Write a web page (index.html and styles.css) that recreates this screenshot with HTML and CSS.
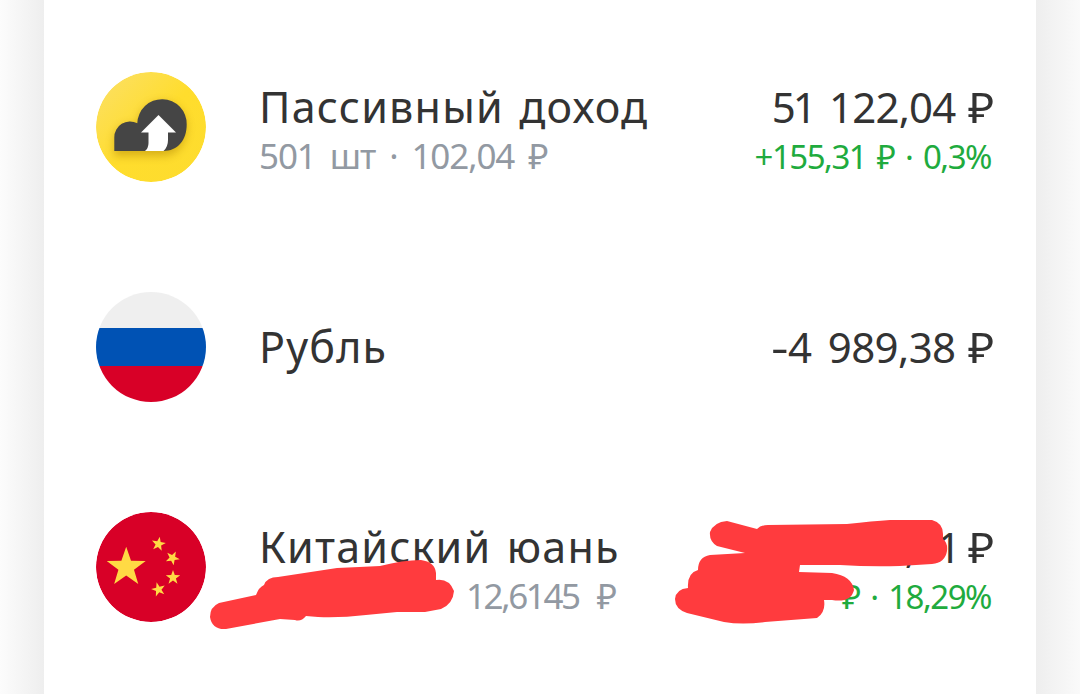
FILE: index.html
```html
<!DOCTYPE html>
<html lang="ru">
<head>
    <meta charset="UTF-8">
    <meta name="viewport" content="width=device-width, initial-scale=1.0">
    <title>Портфель</title>
    <link rel="stylesheet" href="styles.css">
</head>
<body>
    <main class="portfolio">
        <div class="asset">
            <svg class="icon" viewBox="0 0 110 110">
                <defs>
                    <linearGradient id="gold" x1="0" y1="0" x2="1" y2="1">
                        <stop offset="0" stop-color="#fbe06a"/>
                        <stop offset="0.5" stop-color="#ffdd2d"/>
                        <stop offset="1" stop-color="#fddc2e"/>
                    </linearGradient>
                    <filter id="soft" x="-30%" y="-30%" width="160%" height="170%">
                        <feGaussianBlur stdDeviation="4"/>
                    </filter>
                </defs>
                <circle cx="55" cy="55" r="55" fill="url(#gold)"/>
                <path d="M18.300 84V68A15.700 15.700 0 0 1 41.300 54A24.700 24.700 0 0 1 90.700 55C90.700 70 82 84 67 84Z" fill="#a87c00" opacity="0.45" filter="url(#soft)"/>
                <path d="M18.300 79V65.500A15.700 15.700 0 0 1 41.300 51.300A24.700 24.700 0 0 1 90.700 52.500C90.700 68 82 79 67 79Z" fill="#454545"/>
                <path d="M62.500 43L80 60.500H72V68Q72 75 67.500 79H49Q52.500 76 52.500 71V60.500H45Z" fill="#fff"/>
            </svg>
            <div class="info">
                <div class="name">Пассивный доход</div>
                <div class="details">501 шт · 102,04 ₽</div>
            </div>
            <div class="value">
                <div class="amount"><span class="tight">51</span> 122,04<span class="currency">₽</span></div>
                <div class="profit">+155,31 ₽ · 0,3%</div>
            </div>
        </div>

        <div class="asset">
            <div class="icon flag-ru"></div>
            <div class="info single">
                <div class="name">Рубль</div>
            </div>
            <div class="value single">
                <div class="amount debt"><span class="minus">-</span>4 989,38<span class="currency">₽</span></div>
            </div>
        </div>

        <div class="asset">
            <svg class="icon" viewBox="0 0 110 110">
                <defs>
                    <path id="star" d="M0 -10L2.350 -3.240L9.510 -3.090L3.800 1.240L5.880 8.090L0 4L-5.880 8.090L-3.800 1.240L-9.510 -3.090L-2.350 -3.240Z"/>
                </defs>
                <circle cx="55" cy="55" r="55" fill="#d80027"/>
                <g fill="#ffda44">
                    <use href="#star" transform="translate(30.200 55.300) scale(2.050)"/>
                    <use href="#star" transform="translate(62.500 32) rotate(10) scale(0.740)"/>
                    <use href="#star" transform="translate(76.500 46) rotate(27) scale(0.740)"/>
                    <use href="#star" transform="translate(77 65.500) scale(0.760)"/>
                    <use href="#star" transform="translate(62.500 77.500) rotate(-15) scale(0.740)"/>
                </g>
            </svg>
            <div class="info">
                <div class="name">Китайский юань</div>
                <div class="details"><span class="covered">0 000 ¥ ·</span><span class="rate">12,6145</span> ₽</div>
            </div>
            <div class="value">
                <div class="amount yuan">00 000,01<span class="currency">₽</span></div>
                <div class="profit"><span class="covered-profit">+0 000</span>₽ · 18,29%</div>
            </div>
            <!-- marker strokes over private sums -->
            <svg class="marker" viewBox="200 510 770 130">
                <path d="M219 603L256 595Q259 587 264 585Q267 577 278 577L337 568Q360 567 380 566Q403 560 421 560Q435 562 436 573L436 580Q449 578 454 591Q453 604 441 609L425 612H397L366 615Q340 618 318 617L306 616Q301 622 295 620L280 619L226 629Q212 630 210 617Q210 607 219 603Z"/>
                <path d="M727 521L757 529Q761 525 768 525L847 524Q873 521 890 520L932 520Q943 523 943 534V539Q948 543 947 551Q945 563 932 564L900 566Q870 567 840 565L800 565L799 572L832 573Q852 576 854 590Q851 603 832 600L824 600Q826 612 817 618L765 622Q742 625 724 622L687 613Q675 609 675 599Q676 589 688 588Q687 573 698 570Q698 557 710 555L745 553L717 546Q709 541 710 532Q714 522 727 521Z"/>
            </svg>
        </div>
    </main>
</body>
</html>
```

FILE: styles.css
```css
body {
    margin: 0;
    height: 694px;
    overflow: hidden;
    background: linear-gradient(to right, #fcfcfc 0, #eeeeee 44px, #eeeeee 1036px, #fafafa 1080px);
    font-family: "Noto Sans", sans-serif;
}

.portfolio {
    box-sizing: border-box;
    width: 992px;
    height: 694px;
    margin: 0 auto;
    padding: 17.4px 43px 0 52px;
    background-color: #fff;
}

.asset {
    position: relative;
    display: flex;
    align-items: center;
    height: 220px;
}

.icon {
    flex: none;
    width: 110px;
    height: 110px;
    border-radius: 50%;
}

.flag-ru {
    background: linear-gradient(to bottom, #efefef 0 36px, #0052b4 36px 74px, #d80027 74px);
}

.info {
    flex: 1;
    margin-left: 53px;
    padding-top: 6px;
    white-space: nowrap;
}

.value {
    padding-top: 8px;
    text-align: right;
    white-space: nowrap;
}

.single {
    padding-top: 0;
}

.name,
.amount {
    color: #333;
    font-size: 42px;
    line-height: 50px;
}

.name {
    font-size: 43px;
    font-weight: 430;
    letter-spacing: 1.2px;
    word-spacing: 3px;
}

.amount {
    letter-spacing: -0.8px;
}

.amount .tight {
    letter-spacing: -3px;
    margin-right: 5px;
}

.debt {
    letter-spacing: -0.6px;
    word-spacing: 6px;
}

.minus {
    display: inline-block;
    margin-right: 2px;
    transform: scaleX(1.3);
}

.yuan {
    letter-spacing: -1.5px;
}

.details {
    color: #9299a2;
    font-size: 35px;
    line-height: 47px;
    letter-spacing: -1.1px;
    word-spacing: 6px;
}

.rate {
    margin-right: 4px;
    letter-spacing: -2.4px;
}

.profit {
    margin-right: 2px;
    color: #1fab3e;
    font-size: 33px;
    line-height: 49px;
    letter-spacing: -1.5px;
    word-spacing: 3.5px;
}

.currency {
    display: inline-block;
    margin-left: 13px;
    letter-spacing: 0;
    transform: scaleX(1.08);
}

.yuan .currency {
    margin-left: 9px;
}

.covered {
    display: inline-block;
    width: 207px;
}

.covered-profit {
    margin-right: 24px;
}

.marker {
    position: absolute;
    top: 52.6px;
    left: 104px;
    width: 770px;
    height: 130px;
    fill: #ff3b3e;
}
```
